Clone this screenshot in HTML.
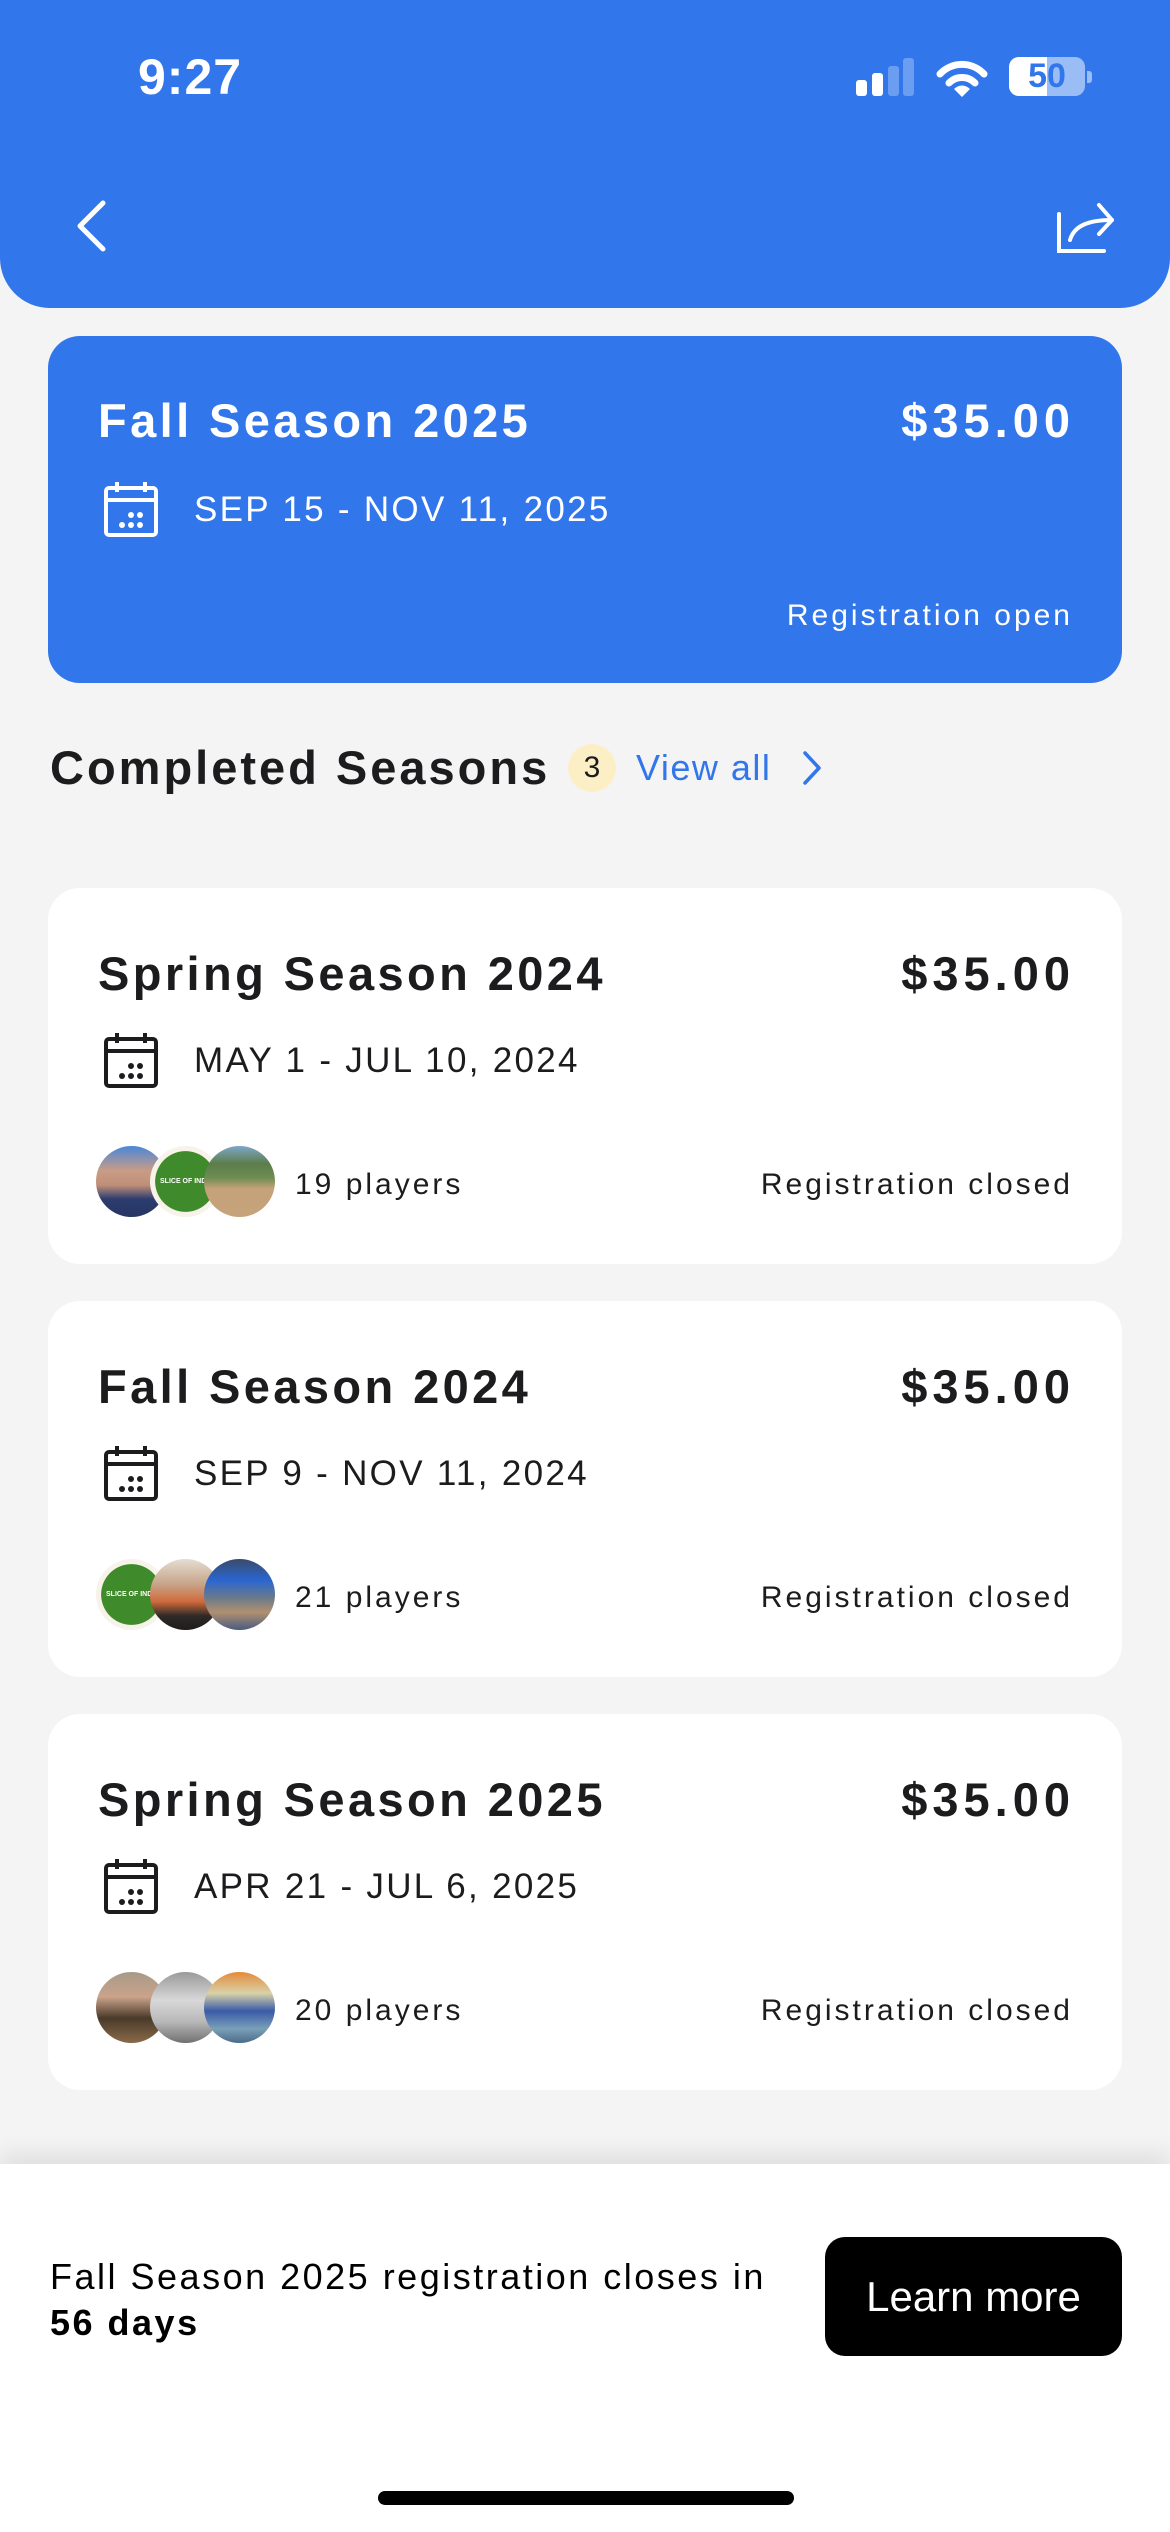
<!DOCTYPE html>
<html><head><meta charset="utf-8"><style>
*{margin:0;padding:0;box-sizing:border-box}
body{width:1170px;height:2532px;background:#f4f4f4;position:relative;overflow:hidden;font-family:"Liberation Sans",sans-serif;color:#1c1c1e}
.a{position:absolute;white-space:nowrap}
.hdr{position:absolute;left:0;top:0;width:1170px;height:308px;background:#3176ea;border-radius:0 0 50px 50px}
.card{position:absolute;left:48px;width:1074px;height:376px;background:#fff;border-radius:32px}
.t{font-weight:bold;font-size:47px;letter-spacing:3.4px;height:60px;line-height:60px}
.p{font-weight:bold;font-size:47px;letter-spacing:5px;height:60px;line-height:60px}
.d{font-size:35px;letter-spacing:2.3px;height:50px;line-height:50px}
.s{font-size:30px;letter-spacing:3px;height:40px;line-height:40px}
.av{position:absolute;width:71px;height:71px;border-radius:50%;overflow:hidden}
</style></head><body>
<div class="hdr"></div>
<div class="a" style="left:138px;top:48px;font-size:50px;font-weight:bold;color:#fff;line-height:58px;letter-spacing:1px">9:27</div>
<div class="a" style="left:856px;top:80px;width:11px;height:16px;background:#fff;border-radius:3px"></div>
<div class="a" style="left:872px;top:73px;width:11px;height:23px;background:#fff;border-radius:3px"></div>
<div class="a" style="left:888px;top:66px;width:11px;height:30px;background:#6b9df0;border-radius:3px"></div>
<div class="a" style="left:903px;top:58px;width:11px;height:38px;background:#6b9df0;border-radius:3px"></div>
<svg class="a" style="left:935px;top:58px" width="54" height="40" viewBox="0 0 54 40"><path d="M5 16 A30 30 0 0 1 49 16" stroke="#fff" stroke-width="7" fill="none" stroke-linecap="round"/><path d="M14 25 A18 18 0 0 1 40 25" stroke="#fff" stroke-width="7" fill="none" stroke-linecap="round"/><path d="M19 31 L27 39 L35 31 A11 11 0 0 0 19 31Z" fill="#fff"/></svg>
<div class="a" style="left:1009px;top:57px;width:76px;height:39px;border-radius:10px;background:#9bbdf5;overflow:hidden"><div style="width:38px;height:39px;background:#fff"></div></div>
<div class="a" style="left:1087px;top:71px;width:5px;height:12px;background:#9bbdf5;border-radius:0 3px 3px 0"></div>
<div class="a" style="left:1009px;top:57px;width:76px;height:39px;line-height:39px;text-align:center;font-weight:bold;font-size:34px;color:#3176ea">50</div>
<svg class="a" style="left:70px;top:198px" width="40" height="56" viewBox="0 0 40 56"><path d="M33 5 L10 28 L33 51" stroke="#fff" stroke-width="5" fill="none" stroke-linecap="round" stroke-linejoin="round"/></svg>
<svg class="a" style="left:1050px;top:196px" width="76" height="64" viewBox="1050 196 76 64"><path d="M1059 214 V251 H1104" stroke="#fff" stroke-width="4" fill="none" stroke-linecap="round"/><path d="M1070 240 C1074 226 1088 220 1112 220" stroke="#fff" stroke-width="4" fill="none" stroke-linecap="round"/><path d="M1099 205 L1112 220 L1099 234" stroke="#fff" stroke-width="4" fill="none" stroke-linecap="round" stroke-linejoin="round"/></svg>
<div class="a" style="left:48px;top:336px;width:1074px;height:347px;background:#3176ea;border-radius:32px"></div>
<div class="a t" style="left:98px;top:391px;color:#fff">Fall Season 2025</div>
<div class="a p" style="right:95px;top:391px;color:#fff">$35.00</div>
<svg class="a" style="left:103px;top:480px" width="56" height="58" viewBox="0 0 56 58"><rect x="3" y="8" width="50" height="47" rx="3" stroke="#fff" stroke-width="4" fill="none"/><path d="M3 20 H53 M14 2 V12 M42 2 V12" stroke="#fff" stroke-width="4"/><g fill="#fff"><circle cx="19" cy="45" r="3"/><circle cx="28" cy="45" r="3"/><circle cx="37" cy="45" r="3"/><circle cx="28" cy="35" r="3"/><circle cx="37" cy="35" r="3"/></g></svg>
<div class="a d" style="left:194px;top:485px;color:#fff">SEP 15 - NOV 11, 2025</div>
<div class="a s" style="right:97px;top:596px;color:#fff">Registration open</div>
<div class="a" style="left:50px;top:740px;font-size:47px;font-weight:bold;letter-spacing:3px;line-height:56px">Completed Seasons</div>
<div class="a" style="left:568px;top:744px;width:48px;height:48px;border-radius:50%;background:#fcefc6;text-align:center;line-height:48px;font-size:30px">3</div>
<div class="a" style="left:636px;top:744px;font-size:36px;color:#3176ea;letter-spacing:1.5px;line-height:48px">View all</div>
<svg class="a" style="left:798px;top:748px" width="28" height="40" viewBox="0 0 28 40"><path d="M7 5 L21 20 L7 35" stroke="#3176ea" stroke-width="3.5" fill="none" stroke-linecap="round" stroke-linejoin="round"/></svg>

<div class="card" style="top:888px"></div>
<div class="card" style="top:1301px"></div>
<div class="card" style="top:1714px"></div>

<div class="a t" style="left:98px;top:944px">Spring Season 2024</div>
<div class="a p" style="right:95px;top:944px">$35.00</div>
<div class="a d" style="left:194px;top:1036px">MAY 1 - JUL 10, 2024</div>
<div class="a s" style="left:295px;top:1165px">19 players</div>
<div class="a s" style="right:97px;top:1165px">Registration closed</div>

<div class="a t" style="left:98px;top:1357px">Fall Season 2024</div>
<div class="a p" style="right:95px;top:1357px">$35.00</div>
<div class="a d" style="left:194px;top:1449px">SEP 9 - NOV 11, 2024</div>
<div class="a s" style="left:295px;top:1578px">21 players</div>
<div class="a s" style="right:97px;top:1578px">Registration closed</div>

<div class="a t" style="left:98px;top:1770px">Spring Season 2025</div>
<div class="a p" style="right:95px;top:1770px">$35.00</div>
<div class="a d" style="left:194px;top:1862px">APR 21 - JUL 6, 2025</div>
<div class="a s" style="left:295px;top:1991px">20 players</div>
<div class="a s" style="right:97px;top:1991px">Registration closed</div>

<svg class="a" style="left:103px;top:1031px" width="56" height="58" viewBox="0 0 56 58"><rect x="3" y="8" width="50" height="47" rx="3" stroke="#1c1c1e" stroke-width="4" fill="none"/><path d="M3 20 H53 M14 2 V12 M42 2 V12" stroke="#1c1c1e" stroke-width="4"/><g fill="#1c1c1e"><circle cx="19" cy="45" r="3"/><circle cx="28" cy="45" r="3"/><circle cx="37" cy="45" r="3"/><circle cx="28" cy="35" r="3"/><circle cx="37" cy="35" r="3"/></g></svg>
<svg class="a" style="left:103px;top:1444px" width="56" height="58" viewBox="0 0 56 58"><rect x="3" y="8" width="50" height="47" rx="3" stroke="#1c1c1e" stroke-width="4" fill="none"/><path d="M3 20 H53 M14 2 V12 M42 2 V12" stroke="#1c1c1e" stroke-width="4"/><g fill="#1c1c1e"><circle cx="19" cy="45" r="3"/><circle cx="28" cy="45" r="3"/><circle cx="37" cy="45" r="3"/><circle cx="28" cy="35" r="3"/><circle cx="37" cy="35" r="3"/></g></svg>
<svg class="a" style="left:103px;top:1857px" width="56" height="58" viewBox="0 0 56 58"><rect x="3" y="8" width="50" height="47" rx="3" stroke="#1c1c1e" stroke-width="4" fill="none"/><path d="M3 20 H53 M14 2 V12 M42 2 V12" stroke="#1c1c1e" stroke-width="4"/><g fill="#1c1c1e"><circle cx="19" cy="45" r="3"/><circle cx="28" cy="45" r="3"/><circle cx="37" cy="45" r="3"/><circle cx="28" cy="35" r="3"/><circle cx="37" cy="35" r="3"/></g></svg>

<div class="av" style="left:96px;top:1146px;background:linear-gradient(180deg,#4a86d8 0%,#c99c86 35%,#c08f78 55%,#2b3c6e 75%,#273562 100%)"></div>
<div class="av" style="left:150px;top:1146px;background:radial-gradient(circle,#3f8a2a 0 60%,#f7f3ea 61%)"><div style="position:absolute;left:10px;top:32px;font-size:7px;color:#fff;font-weight:bold">SLICE OF IND</div></div>
<div class="av" style="left:204px;top:1146px;background:linear-gradient(180deg,#7ea6c9 0%,#5c7d4a 25%,#6f8d52 45%,#c4a27a 60%,#c6a37a 100%)"></div>
<div class="av" style="left:96px;top:1559px;background:radial-gradient(circle,#3f8a2a 0 60%,#f7f3ea 61%)"><div style="position:absolute;left:10px;top:32px;font-size:7px;color:#fff;font-weight:bold">SLICE OF IND</div></div>
<div class="av" style="left:150px;top:1559px;background:linear-gradient(180deg,#e5ddd2 0%,#c7a58a 35%,#d06a3b 60%,#2e2a28 80%,#1e1c1b 100%)"></div>
<div class="av" style="left:204px;top:1559px;background:linear-gradient(180deg,#3a4b6a 0%,#2a66d0 30%,#6b7a8a 55%,#b09070 75%,#4a5a80 100%)"></div>
<div class="av" style="left:96px;top:1972px;background:linear-gradient(180deg,#a79a88 0%,#caa38a 35%,#4a3a2a 65%,#8a6a48 100%)"></div>
<div class="av" style="left:150px;top:1972px;background:linear-gradient(180deg,#9a9a9a 0%,#d8d8d8 40%,#b8b8b8 70%,#707070 100%)"></div>
<div class="av" style="left:204px;top:1972px;background:linear-gradient(180deg,#e48a3a 0%,#d9d2a8 30%,#3a5aa8 55%,#7aa0b8 80%,#4a6a8a 100%)"></div>

<div class="a" style="left:0;top:2164px;width:1170px;height:368px;background:#fff;box-shadow:0 -12px 20px rgba(0,0,0,0.08)"></div>
<div class="a" style="left:50px;top:2254px;font-size:36px;letter-spacing:2.5px;line-height:46px;color:#000">Fall Season 2025 registration closes in<br><b>56 days</b></div>
<div class="a" style="left:825px;top:2237px;width:297px;height:119px;background:#000;border-radius:20px;color:#fff;font-size:42px;text-align:center;line-height:119px">Learn more</div>
<div class="a" style="left:378px;top:2491px;width:416px;height:14px;background:#000;border-radius:7px"></div>
</body></html>
